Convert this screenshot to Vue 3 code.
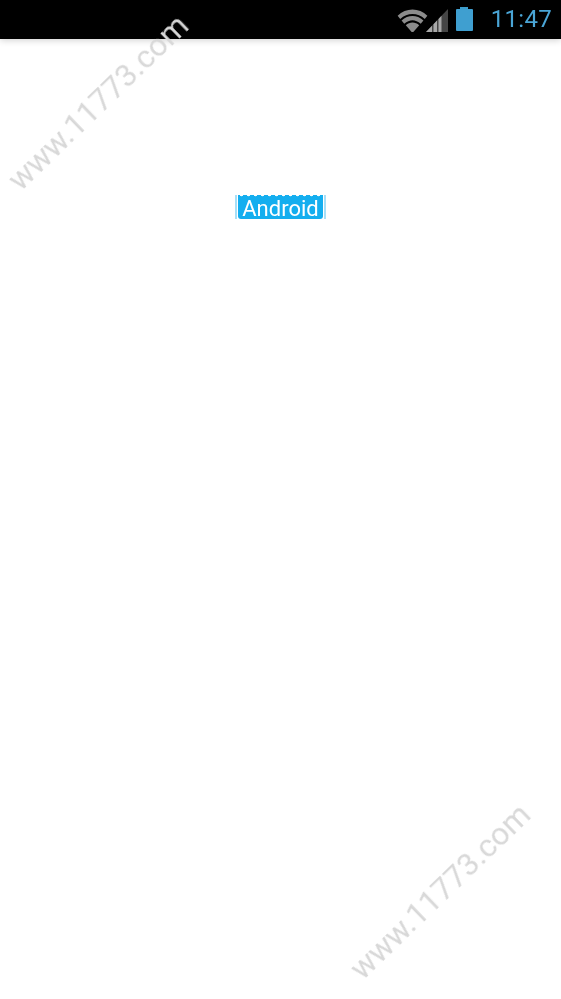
<script setup>
const marks = ['mark-top', 'mark-bottom']
</script>

<template>
  <div class="screen">
    <header class="status-bar">
      <svg class="wifi" viewBox="0 0 32 24" width="31" height="23">
        <path d="M0.5 7 C9 -1.5 23 -1.5 31.5 7 L28.8 10.4 C21.5 3.4 10.5 3.4 3.2 10.4 Z" fill="#8c8c8c" />
        <path d="M4.6 12 C11.5 5.8 20.5 5.8 27.4 12 L24.6 15.4 C19 10.4 13 10.4 7.4 15.4 Z" fill="#8c8c8c" />
        <path d="M9 17 C13 13.2 19 13.2 23 17 L16 25 Z" fill="#8c8c8c" />
      </svg>
      <svg class="signal" viewBox="0 0 22 24" width="22" height="24">
        <path d="M0 24 L22 1 L22 24 Z" fill="#454545" />
        <path d="M0 24 L6 17.7 L6 24 Z M7.5 24 L7.5 16.2 L11 12.5 L11 24 Z M12.5 24 L12.5 11 L15.5 7.8 L15.5 24 Z" fill="#a8a8a8" />
      </svg>
      <div class="battery">
        <span class="battery-cap"></span>
        <span class="battery-body"></span>
      </div>
      <span class="clock">11:47</span>
    </header>
    <main class="content">
      <div class="selected-text">
        <span class="label">Android</span>
      </div>
    </main>
    <span v-for="m in marks" :key="m" class="watermark" :class="m">www.11773.com</span>
  </div>
</template>

<style scoped>
.screen {
  position: relative;
  width: 561px;
  height: 999px;
  overflow: hidden;
  background: #fff;
  font-family: Roboto, "Liberation Sans", sans-serif;
}

.status-bar {
  display: flex;
  align-items: center;
  justify-content: flex-end;
  height: 39px;
  padding-right: 9px;
  box-sizing: border-box;
  background: #000;
  box-shadow: 0 1px 7px rgba(0, 0, 0, 0.2);
}

.wifi {
  margin-top: 2px;
  filter: blur(0.5px);
}

.signal {
  margin-left: -2px;
  margin-top: 1px;
  filter: blur(0.5px);
}

.battery {
  display: flex;
  flex-direction: column;
  align-items: center;
  width: 17px;
  margin-left: 8px;
  margin-bottom: 1px;
  filter: blur(0.5px);
}

.battery-cap {
  width: 8px;
  height: 2px;
  background: #3b9ccb;
}

.battery-body {
  width: 17px;
  height: 22px;
  border-radius: 1px;
  background: #3f9fd0;
}

.clock {
  margin-left: 18px;
  margin-bottom: 1px;
  color: #4aa5d6;
  font-size: 24px;
  letter-spacing: 0.3px;
  filter: blur(0.3px);
}

.content {
  display: flex;
  justify-content: center;
  padding-top: 156px;
}

.selected-text {
  display: flex;
  height: 24px;
  padding: 0 1px;
  border-left: 2px solid #a6dff8;
  border-right: 2px solid #a6dff8;
}

.label {
  position: relative;
  display: block;
  padding: 3px 4px 0;
  border-radius: 0 0 3px 3px;
  background: #14aeef;
  color: #fff;
  font-size: 22px;
  line-height: 21px;
  filter: blur(0.4px);
}

/* wavy edge along the top of the selection */
.label::before {
  content: '';
  position: absolute;
  left: 0;
  right: 0;
  top: 0;
  height: 2px;
  background: radial-gradient(circle at 50% 0, #fff 1.1px, transparent 1.6px) 0 0 / 7px 2px repeat-x;
}

.watermark {
  position: absolute;
  color: #d8d8d8;
  font-size: 31.5px;
  white-space: nowrap;
  transform: rotate(-44deg);
  transform-origin: center;
  filter: blur(0.4px);
}

.mark-top {
  left: -20px;
  top: 84px;
}

.mark-bottom {
  left: 322px;
  top: 873px;
}
</style>
